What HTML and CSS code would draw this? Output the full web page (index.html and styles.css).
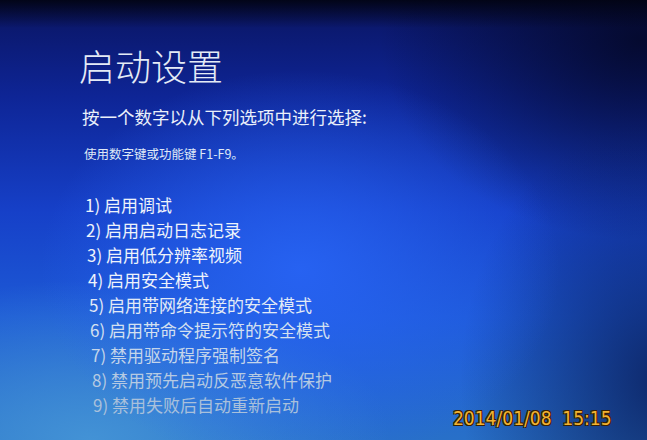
FILE: index.html
```html
<!DOCTYPE html>
<html lang="zh-CN">
<head>
<meta charset="utf-8">
<title>启动设置</title>
<link rel="stylesheet" href="styles.css">
</head>
<body>
<div class="screen">
  <div class="content">
    <h1 class="title">启动设置</h1>
    <p class="lead">按一个数字以从下列选项中进行选择:</p>
    <p class="hint">使用数字键或功能键 F1-F9。</p>
    <ol class="options">
      <li>1) 启用调试</li>
      <li>2) 启用启动日志记录</li>
      <li>3) 启用低分辨率视频</li>
      <li>4) 启用安全模式</li>
      <li>5) 启用带网络连接的安全模式</li>
      <li>6) 启用带命令提示符的安全模式</li>
      <li>7) 禁用驱动程序强制签名</li>
      <li>8) 禁用预先启动反恶意软件保护</li>
      <li>9) 禁用失败后自动重新启动</li>
    </ol>
  </div>
  <div class="stamp">2014/01/08&nbsp;&nbsp;15:15</div>
</div>
</body>
</html>
```
FILE: styles.css
```css
html, body {
  margin: 0;
  padding: 0;
  background: #061040;
}
.screen {
  position: relative;
  width: 647px;
  height: 440px;
  overflow: hidden;
  font-family: "Noto Sans CJK SC", "Noto Sans", sans-serif;
  background:
    linear-gradient(to bottom, rgba(2,4,20,0.95) 0px, rgba(2,4,20,0.6) 10px, rgba(2,4,20,0) 28px),
    radial-gradient(ellipse 260px 200px at 300px 270px, rgba(40,100,245,0.9), rgba(40,100,245,0) 100%),
    radial-gradient(ellipse 300px 160px at 90px 440px, rgba(70,150,215,0.9), rgba(70,150,215,0) 100%),
    radial-gradient(ellipse 200px 260px at 660px 380px, rgba(10,30,90,0.85), rgba(10,30,90,0) 100%),
    radial-gradient(ellipse 260px 200px at 640px 40px, rgba(4,8,40,0.9), rgba(4,8,40,0) 100%),
    linear-gradient(to bottom, #0a1460 0%, #0e2596 22%, #1640c8 48%, #1d5ad6 72%, #2870c8 100%);
}
.content {
  padding: 40px 0 0 79px;
}
.title {
  margin: 0;
  font-size: 36px;
  line-height: 50px;
  font-weight: 300;
  color: #e4ebf6;
  letter-spacing: 0;
}
.lead {
  margin: 16px 0 0 3px;
  font-size: 17.5px;
  line-height: 22px;
  font-weight: 400;
  color: #eaf0fa;
}
.hint {
  margin: 18px 0 0 5px;
  font-size: 12.5px;
  line-height: 16px;
  color: #dfe8f6;
}
.options {
  list-style: none;
  margin: 30px 0 0 6px;
  padding: 0;
  font-size: 17px;
  line-height: 25px;
  color: #eef3fb;
}
.options li:nth-child(2) { margin-left: 1px; }
.options li:nth-child(3) { margin-left: 2px; }
.options li:nth-child(4) { margin-left: 3px; }
.options li:nth-child(5) { margin-left: 4px; color: #e2eaf6; }
.options li:nth-child(6) { margin-left: 5px; color: #d4e0f0; }
.options li:nth-child(7) { margin-left: 6px; color: #c4d5ea; }
.options li:nth-child(8) { margin-left: 7px; color: #b6cae2; }
.options li:nth-child(9) { margin-left: 8px; color: #a9c0db; }
.stamp {
  position: absolute;
  left: 453px;
  top: 405px;
  font-family: "DejaVu Sans Condensed", "DejaVu Sans", sans-serif;
  font-size: 19px;
  line-height: 26px;
  color: #f2b331;
  letter-spacing: 0;
  text-shadow: 1px 1px 0 #3a2000, -1px -1px 0 #3a2000, 1px -1px 0 #3a2000, -1px 1px 0 #3a2000;
}
```
